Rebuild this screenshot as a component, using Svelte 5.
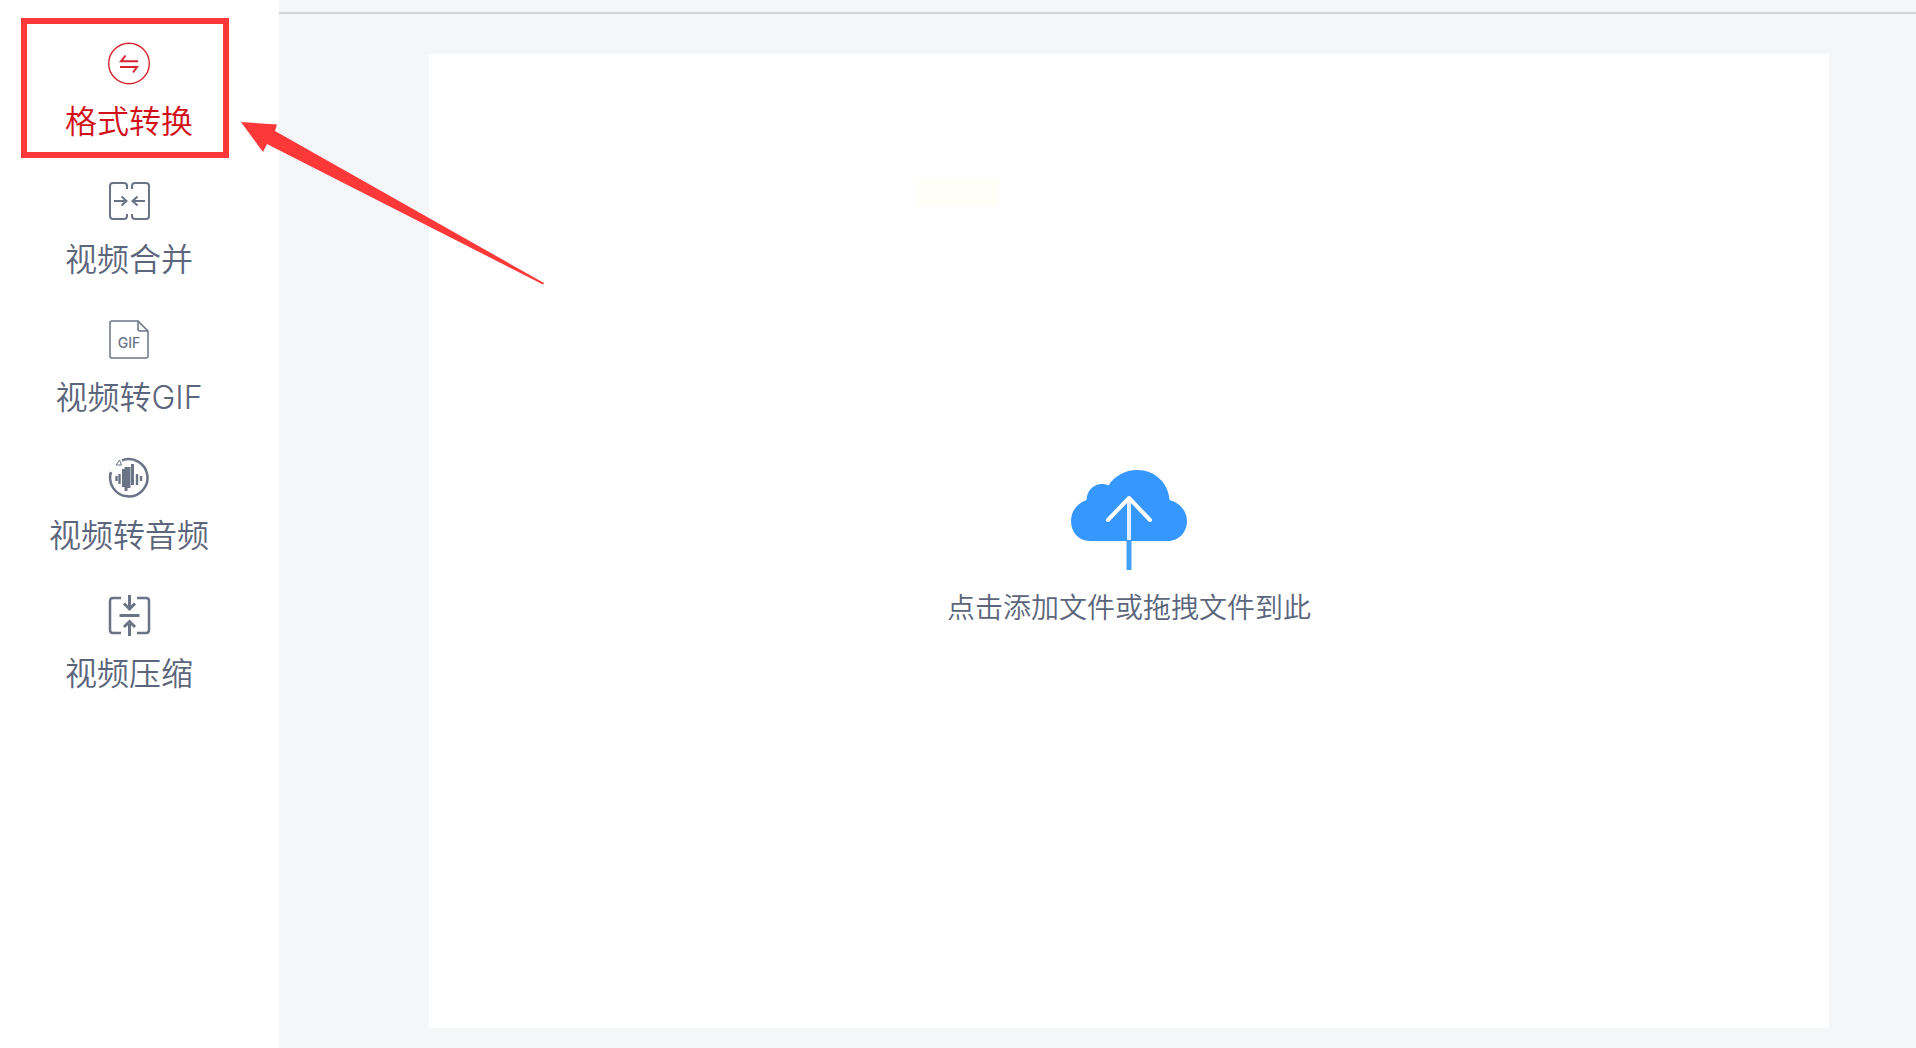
<script>
  const tools = [
    { id: 'convert', label: '格式转换' },
    { id: 'merge', label: '视频合并' },
    { id: 'gif', label: '视频转GIF' },
    { id: 'audio', label: '视频转音频' },
    { id: 'compress', label: '视频压缩' }
  ];
  let active = $state('convert');
</script>

<div class="app">
  <nav class="sidebar">
    {#each tools as tool (tool.id)}
      <button class="tool" class:active={active === tool.id} onclick={() => (active = tool.id)}>
        <svg class="icon" viewBox="0 0 44 44" aria-hidden="true">
          {#if tool.id === 'convert'}
            <circle cx="22" cy="21.500" r="20.3" stroke-width="1.4" />
            <path d="M31 19.300H14L18.500 13.500M13 25H30L26 30.500" stroke-width="2" />
          {:else if tool.id === 'merge'}
            <path d="M20 9V6Q20 3 17 3H6Q3 3 3 6V36Q3 39 6 39H17Q20 39 20 36V34" />
            <path d="M25 9V6Q25 3 28 3H39Q42 3 42 6V36Q42 39 39 39H28Q25 39 25 36V34" />
            <path d="M7 21H19M14.5 16.5L19.5 21L14.5 25.5M38 21H26M30.5 16.5L25.5 21L30.5 25.5" />
          {:else if tool.id === 'gif'}
            <path d="M5 3H31L41 13V38Q41 40 39 40H5Q3 40 3 38V5Q3 3 5 3Z" stroke-width="1.5" />
            <path d="M31 3V11Q31 13 33 13H41" stroke-width="1.5" />
            <text x="22" y="30" text-anchor="middle">GIF</text>
          {:else if tool.id === 'audio'}
            <path d="M15 4.300A18.700 18.700 0 1 1 4 16" stroke-width="2.5" />
            <path d="M9 9L12.500 4L14.500 9Z" stroke-width="1" />
            <path d="M9.500 20V25M12.500 18V28M30 18V29M34 20V25" stroke-width="2.4" />
            <path d="M16.500 13V31M19 11V35M22 11V32M25.500 8V29" stroke-width="3" />
          {:else}
            <path d="M14 4H6Q3 4 3 7V36Q3 39 6 39H14M30 4H39Q42 4 42 7V36Q42 39 39 39H30" stroke-width="2.5" />
            <path d="M12.500 21.500H32.500" stroke-width="3" />
            <path d="M22.500 1V13M22.500 42V30" stroke-width="3" />
            <path d="M17 9.500L22.500 15L28 9.500M17 33L22.500 27.500L28 33" stroke-width="3" />
          {/if}
        </svg>
        <span>{tool.label}</span>
      </button>
    {/each}
  </nav>

  <main class="workspace">
    <header class="topbar"></header>
    <section class="stage">
      <button class="drop">
        <svg class="cloud" viewBox="0 0 118 100" aria-hidden="true">
          <path
            d="M20 71C8.500 71 1 62 1 51C1 41 7.500 33 16.500 30C17 20 24 14 32 14C34.500 14 36.500 14.500 38.500 15.500C44.500 6 55 0 67 0C85 0 98.500 13 99.500 30C109 32.500 117 40.500 117 51C117 62 109 71 98 71Z"
            fill="#3698ff"
          />
          <path d="M59 29V70" stroke="#e2f0ff" stroke-width="4" />
          <path d="M38 50L59 28L80 50" stroke="#fff" stroke-width="4" stroke-linecap="round" stroke-linejoin="round" fill="none" />
          <path d="M59 71V100" stroke="#42a0ff" stroke-width="5" />
        </svg>
        <span>点击添加文件或拖拽文件到此</span>
      </button>
      <div class="hint"></div>
    </section>
  </main>

  <div class="highlight"></div>
  <svg class="pointer" viewBox="0 0 304 164" aria-hidden="true">
    <path d="M0 0L36 2.500L34 9L303 161L302 162.500L26 22L22 30Z" fill="#fd3838" />
  </svg>
</div>

<style>
  :global(body) {
    margin: 0;
  }
  .app {
    position: relative;
    display: flex;
    min-height: 100vh;
    background: #f5f6f8;
    font-family: Inter, 'Noto Sans CJK SC', sans-serif;
    font-weight: 350;
    color: #5b657b;
  }
  .sidebar {
    box-sizing: border-box;
    flex: none;
    width: 279px;
    padding: 42px 21px 0 0;
    display: flex;
    flex-direction: column;
    align-items: center;
    gap: 38px;
    background: #fff;
  }
  button {
    border: 0;
    padding: 0;
    background: none;
    font: inherit;
    color: inherit;
    cursor: pointer;
  }
  .tool {
    display: flex;
    flex-direction: column;
    align-items: center;
    gap: 16px;
    font-size: 32px;
    line-height: 40px;
  }
  .tool.active {
    color: #d20f17;
  }
  .icon {
    width: 44px;
    height: 44px;
    fill: none;
    stroke: currentColor;
    stroke-width: 2;
    opacity: 0.9;
  }
  .icon text {
    fill: currentColor;
    stroke: none;
    font-size: 14px;
    font-weight: 500;
  }
  .workspace {
    flex: 1;
    display: flex;
    flex-direction: column;
  }
  .topbar {
    height: 12px;
    border-bottom: 2px solid #d3d5d7;
  }
  .stage {
    position: relative;
    flex: 1;
    display: flex;
    margin: 40px 87px 20px 150px;
    background: #fff;
  }
  .drop {
    flex: 1;
    display: flex;
    flex-direction: column;
    align-items: center;
    justify-content: center;
    gap: 18px;
    padding-top: 16px;
    font-size: 28px;
    line-height: 40px;
  }
  .cloud {
    width: 118px;
    height: 100px;
  }
  .hint {
    position: absolute;
    left: 489px;
    top: 125px;
    width: 81px;
    height: 28px;
    background: #fffff8;
  }
  .highlight {
    position: absolute;
    left: 21px;
    top: 18px;
    box-sizing: border-box;
    width: 208px;
    height: 140px;
    border: 6px solid #fd3838;
    pointer-events: none;
  }
  .pointer {
    position: absolute;
    left: 241px;
    top: 122px;
    width: 304px;
    height: 164px;
    pointer-events: none;
  }
</style>
